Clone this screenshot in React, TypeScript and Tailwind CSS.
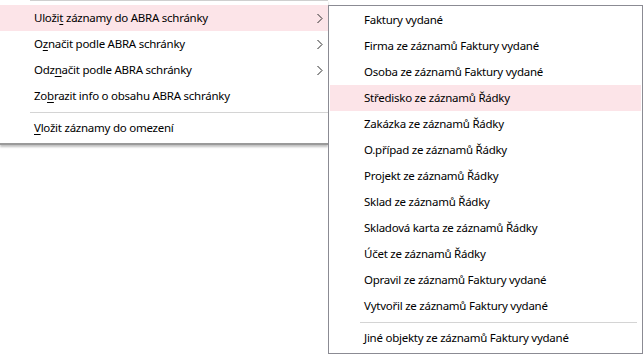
import React from 'react';

type MainItem = { pre: string; key: string; post: string; sub?: boolean; active?: boolean };

const mainItems: MainItem[] = [
    { pre: 'Uloži', key: 't', post: ' záznamy do ABRA schránky', sub: true, active: true },
    { pre: 'O', key: 'z', post: 'načit podle ABRA schránky', sub: true },
    { pre: 'Odz', key: 'n', post: 'ačit podle ABRA schránky', sub: true },
    { pre: 'Zo', key: 'b', post: 'razit info o obsahu ABRA schránky' },
];

const subItems = [
    'Faktury vydané',
    'Firma ze záznamů Faktury vydané',
    'Osoba ze záznamů Faktury vydané',
    'Středisko ze záznamů Řádky',
    'Zakázka ze záznamů Řádky',
    'O.případ ze záznamů Řádky',
    'Projekt ze záznamů Řádky',
    'Sklad ze záznamů Řádky',
    'Skladová karta ze záznamů Řádky',
    'Účet ze záznamů Řádky',
    'Opravil ze záznamů Faktury vydané',
    'Vytvořil ze záznamů Faktury vydané',
];

const Chevron: React.FC = () => (
    <svg width="7" height="11" viewBox="0 0 7 11" className="shrink-0">
        <path d="M1.5 1 L6 5.5 L1.5 10" fill="none" stroke="#2b2b2b" strokeWidth="1" />
    </svg>
);

const App: React.FC = () => {
    return (
        <div
            className="relative w-[643px] h-[354px] bg-white overflow-hidden text-[11.5px] tracking-[-0.25px] text-black"
            style={{ fontFamily: '"Noto Sans", "Liberation Sans", sans-serif' }}
        >
            {/* Main context menu (cut off at top/left) */}
            <div className="w-[328px] bg-white border-b-2 border-[#9a9a9a] shadow-[0_2px_2px_rgba(0,0,0,0.25)]">
                <div className="ml-[30px] h-px bg-[#cfcfcf]" />
                <div className="pt-[4px] pb-[2px]">
                    {mainItems.map((item, i) => (
                        <div
                            key={i}
                            className={`h-[26px] flex items-center justify-between pl-[34px] pr-[5px] ${item.active ? 'bg-[#fce4e8]' : ''}`}
                        >
                            <span className="leading-none">
                                {item.pre}
                                <u className="underline-offset-2">{item.key}</u>
                                {item.post}
                            </span>
                            {item.sub && <Chevron />}
                        </div>
                    ))}
                    <div className="h-[6px] flex items-center">
                        <div className="ml-[30px] flex-1 h-px bg-[#d4d4d4]" />
                    </div>
                    <div className="h-[26px] flex items-center pl-[34px]">
                        <span className="leading-none">
                            <u className="underline-offset-2">V</u>ložit záznamy do omezení
                        </span>
                    </div>
                </div>
            </div>

            {/* Submenu */}
            <div className="absolute left-[328px] top-[5px] w-[315px] h-[349px] bg-white border border-[#8b8b93] pt-px">
                {subItems.map((label, i) => (
                    <div
                        key={i}
                        className={`mx-px h-[26px] flex items-center pl-[34px] ${i === 3 ? 'bg-[#fce4e8]' : ''}`}
                    >
                        <span className="leading-none">{label}</span>
                    </div>
                ))}
                <div className="h-[6px] flex items-center">
                    <div className="ml-[31px] mr-[5px] flex-1 h-px bg-[#d4d4d4]" />
                </div>
                <div className="mx-px h-[26px] flex items-center pl-[34px]">
                    <span className="leading-none">Jiné objekty ze záznamů Faktury vydané</span>
                </div>
            </div>
        </div>
    );
};

export default App;
